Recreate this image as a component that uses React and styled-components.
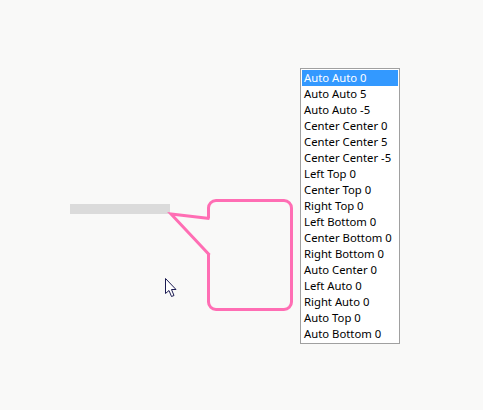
import React, { useState } from "react";
import styled, { createGlobalStyle } from "styled-components";

const GlobalStyle = createGlobalStyle`
  html, body {
    margin: 0;
    padding: 0;
    background: #f9f9f8;
  }
`;

const options = [
  "Auto Auto 0",
  "Auto Auto 5",
  "Auto Auto -5",
  "Center Center 0",
  "Center Center 5",
  "Center Center -5",
  "Left Top 0",
  "Center Top 0",
  "Right Top 0",
  "Left Bottom 0",
  "Center Bottom 0",
  "Right Bottom 0",
  "Auto Center 0",
  "Left Auto 0",
  "Right Auto 0",
  "Auto Top 0",
  "Auto Bottom 0",
];

// Page stage
const Stage = styled.div`
  position: relative;
  width: 483px;
  height: 410px;
  display: flex;
  align-items: flex-start;
  padding-top: 68px;
  box-sizing: border-box;
`;

// Left side holding the target bar
const TargetArea = styled.div`
  width: 300px;
  padding: 136px 0 0 70px;
  box-sizing: border-box;
`;

const TargetBar = styled.div`
  width: 100px;
  height: 10px;
  background: #dbdbdb;
`;

// Listbox of placements
const ListBox = styled.ul`
  list-style: none;
  margin: 0;
  width: 100px;
  padding: 1px;
  box-sizing: border-box;
  border: 1px solid #a0a0a0;
  background: #ffffff;
  font-family: "Noto Sans", "Open Sans", sans-serif;
  font-size: 11.3px;
`;

const Option = styled.li`
  height: 16px;
  line-height: 16px;
  padding-left: 2px;
  white-space: nowrap;
  overflow: hidden;
  color: ${(p) => (p.selected ? "#ffffff" : "#000000")};
  background: ${(p) => (p.selected ? "#3399ff" : "transparent")};
  cursor: default;
`;

// Popover bubble over the page
const Bubble = styled.div`
  position: absolute;
  left: 207px;
  top: 199px;
  width: 86px;
  height: 112px;
  box-sizing: border-box;
  border: 3px solid #ff6eb4;
  border-radius: 9px;
  background: #f9f9f8;
`;

const Tail = styled.svg`
  position: absolute;
  left: 166px;
  top: 208px;
  overflow: visible;
`;

const Pointer = styled.svg`
  position: absolute;
  left: 165px;
  top: 278px;
`;

const App = () => {
  const [selected, setSelected] = useState(0);
  return (
    <>
      <GlobalStyle />
      <Stage>
        <TargetArea>
          <TargetBar />
        </TargetArea>
        <ListBox>
          {options.map((label, index) => (
            <Option
              key={index}
              selected={index === selected}
              onClick={() => setSelected(index)}
            >
              {label}
            </Option>
          ))}
        </ListBox>
        <Bubble />
        <Tail width="46" height="52">
          <polygon
            points="5,6 44,10.5 44,46"
            fill="#f9f9f8"
            stroke="none"
          />
          <polyline
            points="43.5,10.5 5,6 43.5,47"
            fill="none"
            stroke="#ff6eb4"
            strokeWidth="3"
            strokeLinejoin="miter"
          />
        </Tail>
        <Pointer width="13" height="20" viewBox="0 0 13 20">
          <path
            d="M0.5 0.5 L0.5 15.5 L4 12.5 L6.5 18.5 L9 17.5 L6.5 11.5 L11 11.5 Z"
            fill="#ffffff"
            stroke="#1c1c52"
            strokeWidth="1"
          />
        </Pointer>
      </Stage>
    </>
  );
};

export default App;
